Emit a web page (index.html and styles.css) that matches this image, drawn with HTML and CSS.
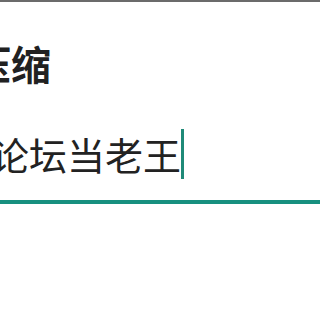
FILE: index.html
```html
<!DOCTYPE html>
<html lang="zh">
<head>
<meta charset="utf-8">
<link rel="stylesheet" href="styles.css">
</head>
<body>
<div class="topbar"></div>
<div class="dialog">
  <div class="title"><span class="title-text">压缩</span></div>
  <div class="field">
    <div class="input">
      <span class="value">论坛当老王</span><span class="caret"></span>
    </div>
  </div>
</div>
</body>
</html>
```
FILE: styles.css
```css
html, body {
  margin: 0;
  padding: 0;
  background: #ffffff;
}
body {
  height: 333px;
  overflow: hidden;
  font-family: "Noto Sans CJK SC", "Noto Sans", sans-serif;
  color: #212121;
}
.topbar {
  height: 2px;
  background: #6b6b6b;
}
.dialog {
  overflow: hidden;
}
.title {
  margin-top: 37px;
  height: 48px;
  white-space: nowrap;
}
.title-text {
  display: inline-block;
  margin-left: -29px;
  font-size: 40px;
  font-weight: 700;
  line-height: 48px;
}
.field {
  margin-top: 42px;
  padding-bottom: 21px;
  border-bottom: 4px solid #17907f;
}
.input {
  display: flex;
  align-items: center;
  height: 50px;
  white-space: nowrap;
}
.value {
  margin-left: -9px;
  font-size: 38px;
  line-height: 50px;
  color: #222222;
}
.caret {
  flex: none;
  width: 3px;
  height: 50px;
  margin-left: 0;
  background: #1f8a78;
}
```
